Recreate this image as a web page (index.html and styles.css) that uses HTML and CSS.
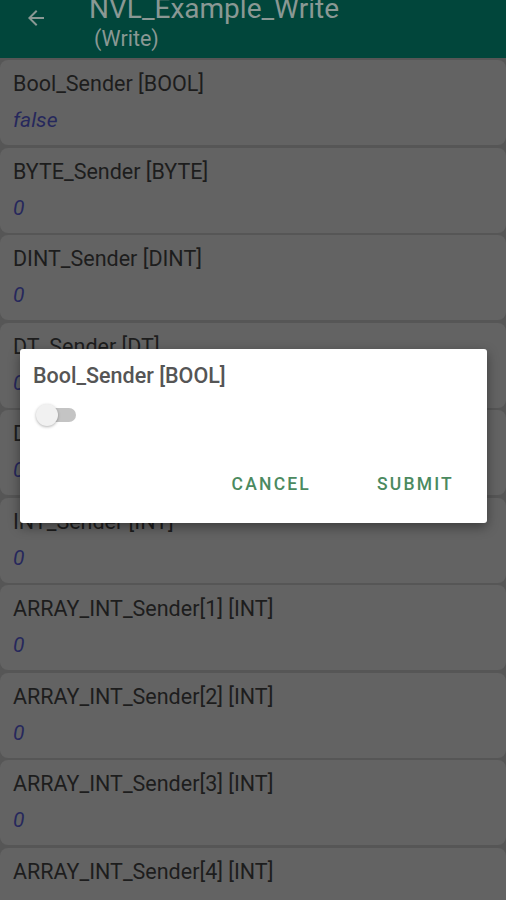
FILE: index.html
```html
<!DOCTYPE html>
<html lang="en">
<head>
    <meta charset="UTF-8">
    <meta name="viewport" content="width=device-width, initial-scale=1.0">
    <title>NVL_Example_Write</title>
    <link rel="stylesheet" href="styles.css">
</head>
<body>
    <header class="appbar">
        <svg class="back" width="24" height="24" viewBox="0 0 24 24">
            <path d="M20 11H7.83l5.59-5.59L12 4l-8 8 8 8 1.41-1.41L7.83 13H20v-2z" fill="currentColor"/>
        </svg>
        <div class="titles">
            <div class="title">NVL_Example_Write</div>
            <div class="subtitle">(Write)</div>
        </div>
    </header>

    <main class="list">
        <div class="card"><div class="name">Bool_Sender [BOOL]</div><div class="value">false</div></div>
        <div class="card"><div class="name">BYTE_Sender [BYTE]</div><div class="value">0</div></div>
        <div class="card"><div class="name">DINT_Sender [DINT]</div><div class="value">0</div></div>
        <div class="card"><div class="name">DT_Sender [DT]</div><div class="value">0</div></div>
        <div class="card"><div class="name">DWORD_Sender [DWORD]</div><div class="value">0</div></div>
        <div class="card"><div class="name">INT_Sender [INT]</div><div class="value">0</div></div>
        <div class="card"><div class="name">ARRAY_INT_Sender[1] [INT]</div><div class="value">0</div></div>
        <div class="card"><div class="name">ARRAY_INT_Sender[2] [INT]</div><div class="value">0</div></div>
        <div class="card"><div class="name">ARRAY_INT_Sender[3] [INT]</div><div class="value">0</div></div>
        <div class="card"><div class="name">ARRAY_INT_Sender[4] [INT]</div><div class="value">0</div></div>
    </main>

    <div class="dialog">
        <div class="dialog-title">Bool_Sender [BOOL]</div>
        <div class="switch"><span class="track"></span><span class="thumb"></span></div>
        <div class="actions">
            <button class="btn">CANCEL</button>
            <button class="btn">SUBMIT</button>
        </div>
    </div>
</body>
</html>
```

FILE: styles.css
```css
body {
    margin: 0;
    font-family: Roboto, "Liberation Sans", sans-serif;
    background-color: #565656;
    overflow: hidden;
    height: 900px;
}
.appbar {
    height: 58px;
    background-color: #01463b;
    display: flex;
    align-items: flex-start;
    color: #8a9894;
}
.back {
    margin: 6px 0 0 24px;
    width: 24px;
    height: 24px;
}
.titles {
    margin-left: 41px;
}
.title {
    font-size: 28px;
    line-height: 28px;
    margin-top: -5px;
}
.subtitle {
    font-size: 21.5px;
    line-height: 24px;
    margin: 4px 0 0 5px;
}
.list {
    padding-top: 2px;
}
.card {
    height: 85px;
    margin-bottom: 2.5px;
    background-color: #636363;
    border-radius: 8px;
    padding: 0 13px;
    box-sizing: border-box;
}
.name {
    font-size: 21.5px;
    line-height: 24px;
    padding-top: 12px;
    color: #1d1d1d;
}
.value {
    font-size: 21px;
    line-height: 24px;
    margin-top: 12px;
    font-style: italic;
    color: #26285c;
}
.dialog {
    position: absolute;
    left: 20px;
    top: 349px;
    width: 467px;
    height: 174px;
    background-color: #fff;
    border-radius: 3px;
    box-shadow: 0 4px 12px rgba(0, 0, 0, 0.4);
    box-sizing: border-box;
    padding: 15px 13px 0 13px;
}
.dialog-title {
    font-size: 21.5px;
    font-weight: 500;
    color: #555;
    line-height: 24px;
}
.switch {
    position: relative;
    width: 44px;
    height: 24px;
    margin: 15px 0 0 3px;
}
.track {
    position: absolute;
    left: 6px;
    top: 5px;
    width: 34px;
    height: 14px;
    border-radius: 7px;
    background-color: #c4c4c4;
}
.thumb {
    position: absolute;
    left: 0;
    top: 1px;
    width: 22px;
    height: 22px;
    border-radius: 50%;
    background-color: #f1f1f1;
    box-shadow: 0 1px 3px rgba(0, 0, 0, 0.3);
}
.actions {
    display: flex;
    justify-content: flex-end;
    gap: 66px;
    margin-top: 47px;
    padding-right: 20px;
}
.btn {
    background: none;
    border: none;
    padding: 0;
    font-family: Roboto, "Liberation Sans", sans-serif;
    font-size: 17.5px;
    line-height: 20px;
    font-weight: 500;
    letter-spacing: 2.2px;
    color: #4b8a5f;
}
```
